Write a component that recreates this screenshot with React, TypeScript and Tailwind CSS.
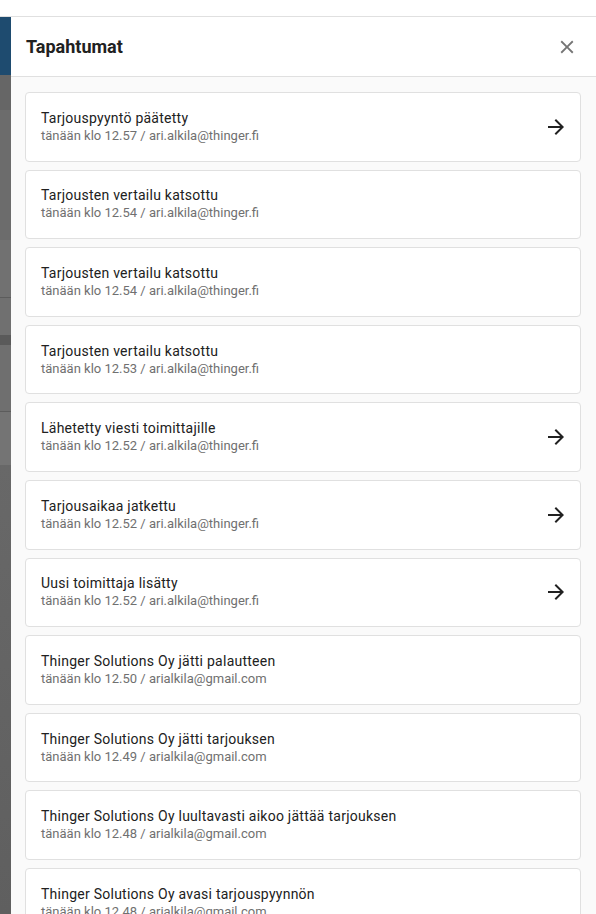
import React from 'react';

type EventItem = { title: string; meta: string; link?: boolean };

const events: EventItem[] = [
  { title: 'Tarjouspyyntö päätetty', meta: 'tänään klo 12.57 / ari.alkila@thinger.fi', link: true },
  { title: 'Tarjousten vertailu katsottu', meta: 'tänään klo 12.54 / ari.alkila@thinger.fi' },
  { title: 'Tarjousten vertailu katsottu', meta: 'tänään klo 12.54 / ari.alkila@thinger.fi' },
  { title: 'Tarjousten vertailu katsottu', meta: 'tänään klo 12.53 / ari.alkila@thinger.fi' },
  { title: 'Lähetetty viesti toimittajille', meta: 'tänään klo 12.52 / ari.alkila@thinger.fi', link: true },
  { title: 'Tarjousaikaa jatkettu', meta: 'tänään klo 12.52 / ari.alkila@thinger.fi', link: true },
  { title: 'Uusi toimittaja lisätty', meta: 'tänään klo 12.52 / ari.alkila@thinger.fi', link: true },
  { title: 'Thinger Solutions Oy jätti palautteen', meta: 'tänään klo 12.50 / arialkila@gmail.com' },
  { title: 'Thinger Solutions Oy jätti tarjouksen', meta: 'tänään klo 12.49 / arialkila@gmail.com' },
  { title: 'Thinger Solutions Oy luultavasti aikoo jättää tarjouksen', meta: 'tänään klo 12.48 / arialkila@gmail.com' },
  { title: 'Thinger Solutions Oy avasi tarjouspyynnön', meta: 'tänään klo 12.48 / arialkila@gmail.com' },
];

const ArrowIcon = () => (
  <svg viewBox="0 0 24 24" className="w-6 h-6 fill-[#212121]">
    <path d="M12 4l-1.41 1.41L16.17 11H4v2h12.17l-5.58 5.59L12 20l8-8z" />
  </svg>
);

const CloseIcon = () => (
  <svg viewBox="0 0 24 24" className="w-[22px] h-[22px] fill-[#757575]">
    <path d="M19 6.41 17.59 5 12 10.59 6.41 5 5 6.41 10.59 12 5 17.59 6.41 19 12 13.41 17.59 19 19 17.59 13.41 12z" />
  </svg>
);

const EventCard: React.FC<{ item: EventItem }> = ({ item }) => (
  <div className="h-[69.6px] shrink-0 flex items-center justify-between bg-white border border-[#e0e0e0] rounded pl-[15px] pr-3">
    <div className="flex flex-col">
      <span className="text-[14px] leading-[18px] tracking-[0.25px] text-[#212121]">{item.title}</span>
      <span className="text-[13px] leading-[18px] text-[#707070]">{item.meta}</span>
    </div>
    {item.link && <ArrowIcon />}
  </div>
);

export default function App() {
  return (
    <div className="w-[596px] h-[914px] overflow-hidden flex flex-col bg-white font-['Roboto',sans-serif]">
      <div className="h-[17px] shrink-0 bg-white border-b border-[#e0e0e0]" />
      <div className="flex flex-1 min-h-0">
        {/* dimmed page behind the drawer */}
        <div className="w-[11px] shrink-0 flex flex-col">
          <div className="h-[58px] bg-[#1e4b6f]" />
          <div className="h-[35px] bg-[#666666]" />
          <div className="h-[130px] bg-[#6c6c6c]" />
          <div className="h-[58px] bg-[#717171] border-b border-[#5c5c5c]" />
          <div className="h-[37px] bg-[#707070]" />
          <div className="h-[10px] bg-[#5a5a5a]" />
          <div className="h-[67px] bg-[#6f6f6f] border-b border-[#5c5c5c]" />
          <div className="h-[53px] bg-[#747474]" />
          <div className="flex-1 bg-gradient-to-b from-[#686868] to-[#5f5f5f]" />
        </div>
        <div className="flex-1 flex flex-col bg-[#fafafa]">
          <div className="h-[60px] shrink-0 flex items-center justify-between bg-white border-b border-[#e0e0e0] pl-[15px] pr-[18px]">
            <h2 className="text-[18px] font-bold text-[#212121]">Tapahtumat</h2>
            <button type="button" className="flex items-center justify-center">
              <CloseIcon />
            </button>
          </div>
          <div className="flex flex-col gap-2 pl-[14px] pr-[15px] pt-[15px]">
            {events.map((e, i) => (
              <EventCard key={i} item={e} />
            ))}
          </div>
        </div>
      </div>
    </div>
  );
}
